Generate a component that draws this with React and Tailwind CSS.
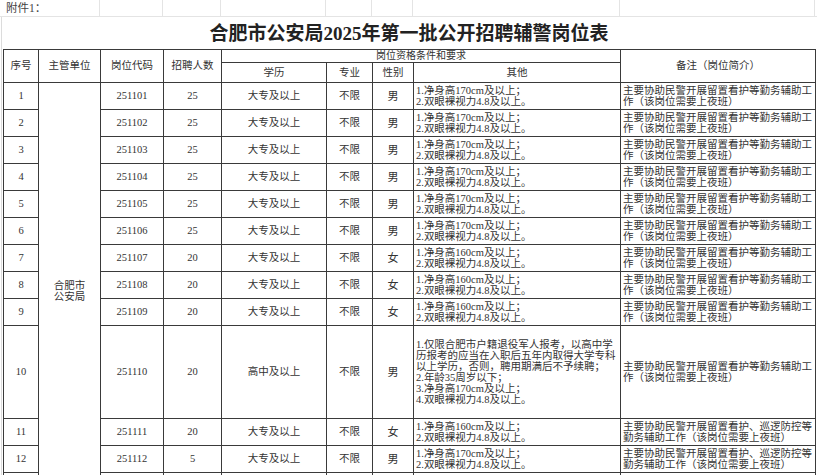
const noteA = ["主要协助民警开展留置看护等勤务辅助工", "作（该岗位需要上夜班）"];
const noteB = ["主要协助民警开展留置看护、巡逻防控等", "勤务辅助工作（该岗位需要上夜班）"];

const rows = [
  { n: 1, code: "251101", num: 25, edu: "大专及以上", sex: "男", h: 170, note: noteA },
  { n: 2, code: "251102", num: 25, edu: "大专及以上", sex: "男", h: 170, note: noteA },
  { n: 3, code: "251103", num: 25, edu: "大专及以上", sex: "男", h: 170, note: noteA },
  { n: 4, code: "251104", num: 25, edu: "大专及以上", sex: "男", h: 170, note: noteA },
  { n: 5, code: "251105", num: 25, edu: "大专及以上", sex: "男", h: 170, note: noteA },
  { n: 6, code: "251106", num: 25, edu: "大专及以上", sex: "男", h: 170, note: noteA },
  { n: 7, code: "251107", num: 20, edu: "大专及以上", sex: "女", h: 160, note: noteA },
  { n: 8, code: "251108", num: 20, edu: "大专及以上", sex: "女", h: 160, note: noteA },
  { n: 9, code: "251109", num: 20, edu: "大专及以上", sex: "女", h: 160, note: noteA },
  {
    n: 10,
    code: "251110",
    num: 20,
    edu: "高中及以上",
    sex: "男",
    tall: true,
    other: [
      "1.仅限合肥市户籍退役军人报考，以高中学",
      "历报考的应当在入职后五年内取得大学专科",
      "以上学历，否则，聘用期满后不予续聘；",
      "2.年龄35周岁以下；",
      "3.净身高170cm及以上；",
      "4.双眼裸视力4.8及以上。",
    ],
    note: noteA,
  },
  { n: 11, code: "251111", num: 20, edu: "大专及以上", sex: "女", h: 160, note: noteB },
  { n: 12, code: "251112", num: 5, edu: "大专及以上", sex: "男", h: 170, note: noteB },
];

const cell = "border border-[#3a3a3a] p-0 text-center align-middle";

const Lines = ({ lines }) => (
  <div className="px-[2px] text-left leading-[11px] whitespace-nowrap">
    {lines.map((l) => (
      <div key={l}>{l}</div>
    ))}
  </div>
);

export default function App() {
  return (
    <div className="w-[817px] h-[475px] overflow-hidden bg-white text-[#333] font-['Liberation_Serif','Noto_Sans_CJK_SC',serif]">
      {/* spreadsheet top row */}
      <div className="grid grid-cols-[100px_63px_58px_105px_46px_41px_207px_195px] h-[17px] border-b border-[#e4e4e4]">
        <div className="border-r border-[#e4e4e4] pl-[6px] text-[11.5px] leading-[16px] text-[#444]">附件1：</div>
        <div className="border-r border-[#e4e4e4]"></div>
        <div className="border-r border-[#e4e4e4]"></div>
        <div className="border-r border-[#e4e4e4]"></div>
        <div className="border-r border-[#e4e4e4]"></div>
        <div className="border-r border-[#e4e4e4]"></div>
        <div className="border-r border-[#e4e4e4]"></div>
        <div className="border-r border-[#e4e4e4]"></div>
      </div>

      <div className="ml-[1px] border-l border-[#dcdcdc] pl-[1px]">
        {/* title */}
        <div className="h-[32px] w-[812px] flex items-center justify-center">
          <h1 className="text-[19px] font-bold text-[#222] leading-none">合肥市公安局2025年第一批公开招聘辅警岗位表</h1>
        </div>

        <table className="table-fixed border-collapse w-[812px] text-[10.5px]">
          <colgroup>
            <col className="w-[35px]" />
            <col className="w-[62px]" />
            <col className="w-[63px]" />
            <col className="w-[58px]" />
            <col className="w-[105px]" />
            <col className="w-[46px]" />
            <col className="w-[41px]" />
            <col className="w-[207px]" />
            <col className="w-[195px]" />
          </colgroup>
          <thead>
            <tr className="h-[13px]">
              <th rowSpan={2} className={`${cell} font-normal`}>序号</th>
              <th rowSpan={2} className={`${cell} font-normal`}>主管单位</th>
              <th rowSpan={2} className={`${cell} font-normal`}>岗位代码</th>
              <th rowSpan={2} className={`${cell} font-normal`}>招聘人数</th>
              <th colSpan={4} className={`${cell} font-normal text-[10px] leading-[12px]`}>岗位资格条件和要求</th>
              <th rowSpan={2} className={`${cell} font-normal`}>备注（岗位简介）</th>
            </tr>
            <tr className="h-[20px]">
              <th className={`${cell} font-normal`}>学历</th>
              <th className={`${cell} font-normal`}>专业</th>
              <th className={`${cell} font-normal`}>性别</th>
              <th className={`${cell} font-normal`}>其他</th>
            </tr>
          </thead>
          <tbody>
            {rows.map((r, i) => (
              <tr key={r.n} className={r.tall ? "h-[93px]" : "h-[27px]"}>
                <td className={cell}>{r.n}</td>
                {i === 0 && (
                  <td rowSpan={rows.length + 1} className={`${cell} leading-[11px]`}>
                    合肥市
                    <br />
                    公安局
                  </td>
                )}
                <td className={cell}>{r.code}</td>
                <td className={cell}>{r.num}</td>
                <td className={cell}>{r.edu}</td>
                <td className={cell}>不限</td>
                <td className={`${cell} text-[11px]`}>{r.sex}</td>
                <td className={cell}>
                  <Lines lines={r.other || [`1.净身高${r.h}cm及以上；`, "2.双眼裸视力4.8及以上。"]} />
                </td>
                <td className={cell}>
                  <Lines lines={r.note} />
                </td>
              </tr>
            ))}
            {/* next row, cut off by the window */}
            <tr className="h-[27px]">
              <td className={cell}></td>
              <td className={cell}></td>
              <td className={cell}></td>
              <td className={cell}></td>
              <td className={cell}></td>
              <td className={cell}></td>
              <td className={cell}></td>
              <td className={cell}></td>
            </tr>
          </tbody>
        </table>
      </div>
    </div>
  );
}
